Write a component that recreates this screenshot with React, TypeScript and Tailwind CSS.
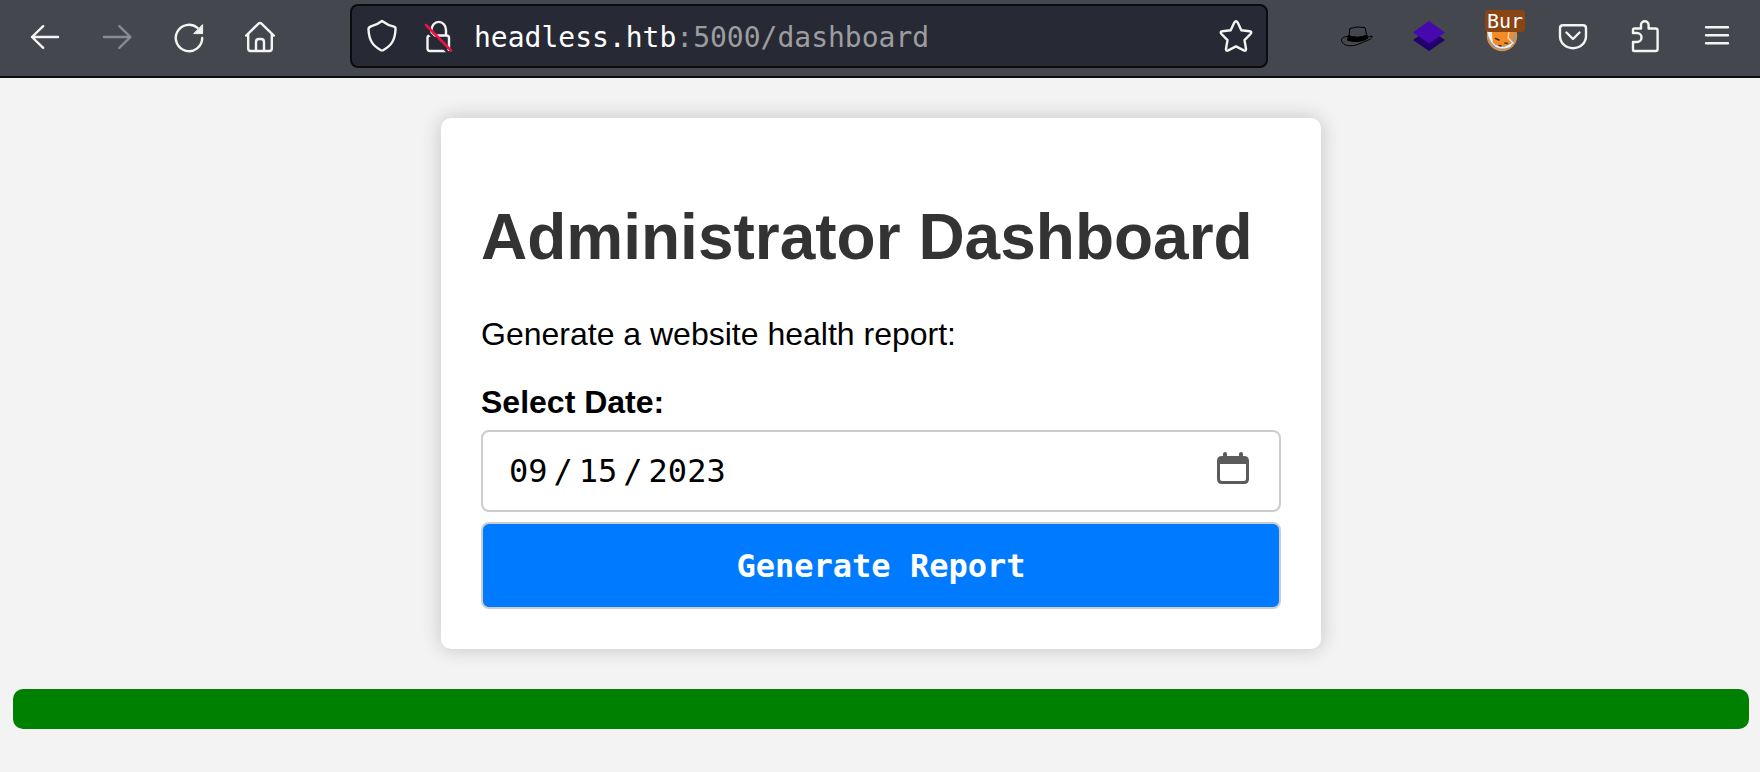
import { useState, type ReactNode } from "react";

const strokeProps = {
  fill: "none",
  stroke: "currentColor",
  strokeWidth: 2.4,
  strokeLinecap: "round" as const,
  strokeLinejoin: "round" as const,
};

function Icon({ children }: { children: ReactNode }) {
  return (
    <svg viewBox="0 0 40 40" className="size-10 shrink-0" aria-hidden="true" {...strokeProps}>
      {children}
    </svg>
  );
}

function ToolButton({ label, disabled, children }: { label: string; disabled?: boolean; children: ReactNode }) {
  return (
    <button
      type="button"
      aria-label={label}
      disabled={disabled}
      className="relative flex h-16 w-[72px] shrink-0 items-center justify-center text-[#f4f4f2] disabled:text-[#8b8b8e]"
    >
      {children}
    </button>
  );
}

function Toolbar() {
  return (
    <header className="flex items-center border-b-2 border-[#0c0c0f] bg-[#45474e] pt-1 pr-[7px] pb-2 pl-[9px]">
      <nav className="flex" aria-label="Navigation">
        <ToolButton label="Back">
          <Icon>
            <path d="M33 21H7M18.200 10.200 7 21l11.200 10.800" />
          </Icon>
        </ToolButton>
        <ToolButton label="Forward" disabled>
          <Icon>
            <path d="M7 21H33M22.300 10.200 33.500 21l-11.200 10.800" />
          </Icon>
        </ToolButton>
        <ToolButton label="Reload">
          <Icon>
            <path d="M33.200 22A13.200 13.200 0 1 1 28.500 11.900" />
            <path d="M33.600 9v8.600H25z" fill="currentColor" strokeWidth="1" />
          </Icon>
        </ToolButton>
        <ToolButton label="Home">
          <Icon>
            <path d="M5.200 19.600 17.500 7.600Q19 6.300 20.500 7.600L32.800 19.600M7.200 18v14.500q0 2.500 2.500 2.500h18.600q2.500 0 2.500-2.500V18M15 34.500V26q0-3 3-3h2q3 0 3 3v8.500" />
          </Icon>
        </ToolButton>
      </nav>

      <div className="mx-[53px] flex h-16 min-w-0 flex-1 items-center rounded-lg border-2 border-[#0c0c0f] bg-[#272a35] px-2.5 text-[#f4f4f2]">
        <Icon>
          <path d="M20 5Q26 9.500 32 10.600 33.700 11 33.500 13.500C33 24 29.500 29.500 21.500 34q-1.500.8-3 0C10.500 29.500 7 24 6.500 13.500 6.300 11 8 10.600 9.500 10.200 13.500 9 17.500 7 20 5z" />
        </Icon>
        <span className="ml-4">
          <Icon>
            <path d="M13.500 19v-5a7 7.800 0 0 1 14.500 0v5.500M13.500 19.500h-1.500q-2.500 0-2.500 2.500v10.500q0 2.500 2.500 2.500h16.500q2.500 0 2.500-2.500V22q0-2.500-2.500-2.500z" />
            <path d="M5.500 11.500l25 25.500" stroke="#272a35" strokeWidth="2.500" strokeLinecap="butt" />
            <path d="M8 9 33 34.500" stroke="#ee1040" strokeWidth="2.600" />
          </Icon>
        </span>
        <div
          role="textbox"
          aria-label="Address"
          className="ml-4 min-w-0 flex-1 truncate pt-1 font-['DejaVu_Sans_Mono',monospace] text-[28px] leading-9 text-[#9d9da0]"
        >
          <span className="text-white">headless.htb</span>:5000/dashboard
        </div>
        <button type="button" aria-label="Bookmark this page">
          <Icon>
            <path d="M18.300 6.600q1.700-2.600 3.400 0l3.600 7.600 8.200 1q3 .5 1 2.800l-6 6.200 1.500 8.600q.2 2.600-2.200 1.600L20 30.400l-7.800 4q-2.400 1-2.200-1.600l1.500-8.600-6-6.200q-2-2.300 1-2.800l8.200-1z" />
          </Icon>
        </button>
      </div>

      <div className="flex" role="group" aria-label="Extensions">
        <ToolButton label="Hat">
          <Icon>
            <g stroke="#000" strokeWidth="1">
              <path d="M12 21.500 12.800 12.500Q20 10 28 11.500L30 20.500" />
              <path d="M11.500 19.500q9 3.500 18.500-.5l.5 3.500q-8.500 5-19.500 2z" fill="#000" />
              <path d="M11 20.500C5 20.500 3.500 23 5 26c3 5 12 4.500 18 1.500 7-3.200 13-4.500 12-7.500l-5.500 1.500" />
            </g>
          </Icon>
        </ToolButton>
        <ToolButton label="Layers">
          <Icon>
            <path d="M4 24l16-11 16 11-16 11z" fill="#20006c" stroke="none" />
            <path d="M4 16.500 20 5l16 11.500-16 11z" fill="#4708ad" stroke="none" />
          </Icon>
        </ToolButton>
        <ToolButton label="Proxy">
          <Icon>
            <circle cx="21" cy="20" r="14.600" fill="#9b9b9b" stroke="#ee8a2c" strokeWidth="1.200" />
            <path d="M6 15h6l2 14 9 2 10-5-4 5q-8 3-14 0-7-5-9-16z" fill="#eee" stroke="none" />
            <path d="M11 16q0 6 1 11 5 3 11 3l6-2q3-5 5-12z" fill="#f58b25" stroke="none" />
            <path d="M28 16l-1 6 5 5" stroke="#e8e8e8" strokeWidth="1.200" />
            <path d="M14.500 22.500l3.500 1.500M24 27l2.500.5M18 29.500l2 .5" stroke="#503018" strokeWidth="1.600" />
          </Icon>
          <span className="absolute top-1.5 left-5 flex h-[22px] w-10 items-center justify-center rounded bg-[#8b4513] font-['DejaVu_Sans_Mono',monospace] text-xl leading-[22px] text-white">
            Bur
          </span>
        </ToolButton>
        <ToolButton label="Pocket">
          <Icon>
            <path d="M10 9.200h20q3 0 3 3v8a13 12 0 0 1-26 0v-8q0-3 3-3zM13.500 16.500l6.500 6.500 6.500-6.500" />
          </Icon>
        </ToolButton>
        <ToolButton label="Add-ons">
          <Icon>
            <path d="M9 35q-1 0-1-1v-8h4a4.500 4.500 0 0 0 0-9H8v-3q0-1.500 1.500-1.500h6.500V9a3.800 3.800 0 0 1 7.600 0v3.500h7q2 0 2 2V33q0 2-2 2z" />
          </Icon>
        </ToolButton>
        <ToolButton label="Menu">
          <Icon>
            <path d="M9 11.200h22M9 19.200h22M9 27.200h22" />
          </Icon>
        </ToolButton>
      </div>
    </header>
  );
}

export default function App() {
  const [date, setDate] = useState("2023-09-15");

  return (
    <div className="min-h-screen bg-[#f3f3f3] font-['Liberation_Sans',Arial,sans-serif] text-[32px] leading-9 text-black">
      <Toolbar />
      <main className="pt-10 pr-[11px] pb-10 pl-[13px]">
        <section className="mx-auto max-w-[880px] rounded-[10px] bg-white p-10 shadow-[0_0_20px_rgba(0,0,0,0.2)]">
          <h1 className="mt-[43px] mb-[42px] text-[64px] leading-[73px] font-bold text-[#333]">
            Administrator Dashboard
          </h1>
          <p className="mb-8">Generate a website health report:</p>
          <form onSubmit={(e) => e.preventDefault()}>
            <label htmlFor="date" className="mb-2.5 block font-bold">
              Select Date:
            </label>
            <div className="mb-2.5 flex h-[82px] items-center rounded-lg border-2 border-[#ccc] pr-[30px] pl-[25px]">
              <input
                id="date"
                type="date"
                value={date}
                onChange={(e) => setDate(e.target.value)}
                className="min-w-0 flex-1 bg-transparent font-['DejaVu_Sans_Mono',monospace] outline-none [&::-webkit-calendar-picker-indicator]:hidden [&::-webkit-datetime-edit-text]:px-[5px]"
              />
              <button type="button" aria-label="Open calendar" className="pb-1.5">
                <svg viewBox="0 0 32 32" className="size-8" fill="#5b5b5b" aria-hidden="true">
                  <path
                    fillRule="evenodd"
                    d="M6 4V2a2 2 0 0 1 4 0v2h12V2a2 2 0 0 1 4 0v2h1q5 0 5 5v18q0 5-5 5H5q-5 0-5-5V9q0-5 5-5zM3 12v15q0 2 2 2h22q2 0 2-2V12z"
                  />
                </svg>
              </button>
            </div>
            <button
              type="submit"
              className="block h-[87px] w-full rounded-lg border-2 border-[#ccc] bg-[#007bff] font-['DejaVu_Sans_Mono',monospace] font-bold text-white"
            >
              Generate Report
            </button>
          </form>
        </section>
        <div className="mt-10 h-10 rounded-[10px] bg-[#008000]" role="status" />
      </main>
    </div>
  );
}
